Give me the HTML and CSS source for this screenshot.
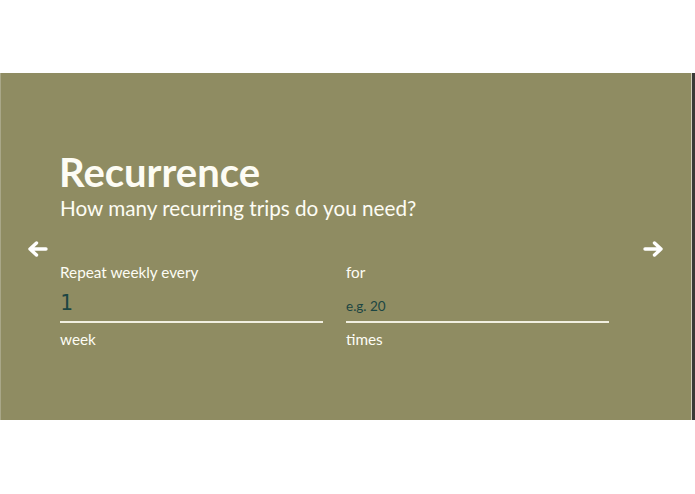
FILE: index.html
```
<!DOCTYPE html>
<html>
<head>
<meta charset="utf-8">
<link rel="stylesheet" href="styles.css">
</head>
<body>
<div class="page">
  <div class="spacer"></div>
  <section class="panel">
    <button class="nav nav-prev" aria-label="Previous">
      <svg viewBox="0 0 20 16" width="20" height="16"><path d="M2 8 L18 8 M8.5 2 L2 8 L8.5 14" fill="none" stroke="#fff" stroke-width="3.4" stroke-linecap="round" stroke-linejoin="round"/></svg>
    </button>
    <div class="content">
      <h1 class="title">Recurrence</h1>
      <p class="subtitle">How many recurring trips do you need?</p>
      <div class="fields">
        <div class="field">
          <label class="label">Repeat weekly every</label>
          <div class="input value">1</div>
          <div class="unit">week</div>
        </div>
        <div class="field">
          <label class="label">for</label>
          <div class="input placeholder">e.g. 20</div>
          <div class="unit">times</div>
        </div>
      </div>
    </div>
    <button class="nav nav-next" aria-label="Next">
      <svg viewBox="0 0 20 16" width="20" height="16"><path d="M2 8 L18 8 M11.5 2 L18 8 L11.5 14" fill="none" stroke="#fff" stroke-width="3.4" stroke-linecap="round" stroke-linejoin="round"/></svg>
    </button>
    <div class="edge"></div>
  </section>
</div>
</body>
</html>
```
FILE: styles.css
```
html, body {
  margin: 0;
  padding: 0;
  background: #fff;
}
body {
  font-family: Lato, "Liberation Sans", sans-serif;
}
.spacer {
  height: 73px;
}
.panel {
  display: grid;
  grid-template-columns: 60px 549px 1fr 4px;
  height: 347px;
  width: 695px;
  background: #8f8c62;
  box-shadow: inset 1px 0 0 #a9a788;
}
.nav {
  background: none;
  border: 0;
  padding: 0;
  display: flex;
  cursor: pointer;
  align-self: center;
  justify-self: start;
  margin-top: 4px;
}
.nav-prev {
  margin-left: 28px;
}
.nav-next {
  margin-left: 34px;
}
.edge {
  background: #3a3a36;
  border-left: 1px solid #cfcdb8;
}
.content {
  color: #fdfcf4;
  padding-top: 75px;
}
.title {
  margin: 0 0 0 -1px;
  font-size: 40px;
  font-weight: 700;
  line-height: 48px;
}
.subtitle {
  margin: 0;
  font-size: 20.7px;
  line-height: 25px;
}
.fields {
  display: grid;
  grid-template-columns: 263px 263px;
  column-gap: 23px;
  margin-top: 42px;
}
.label {
  display: block;
  font-size: 15.3px;
  line-height: 19px;
}
.input {
  border-bottom: 2px solid #f1efe0;
  height: 41px;
  box-sizing: border-box;
  color: #1c4643;
  line-height: 24px;
}
.value {
  font-family: "DejaVu Sans Mono", monospace;
  font-size: 21px;
  padding-top: 9px;
}
.placeholder {
  font-size: 13.5px;
  padding-top: 12px;
}
.unit {
  font-size: 15.3px;
  line-height: 19px;
  margin-top: 7px;
}
```
